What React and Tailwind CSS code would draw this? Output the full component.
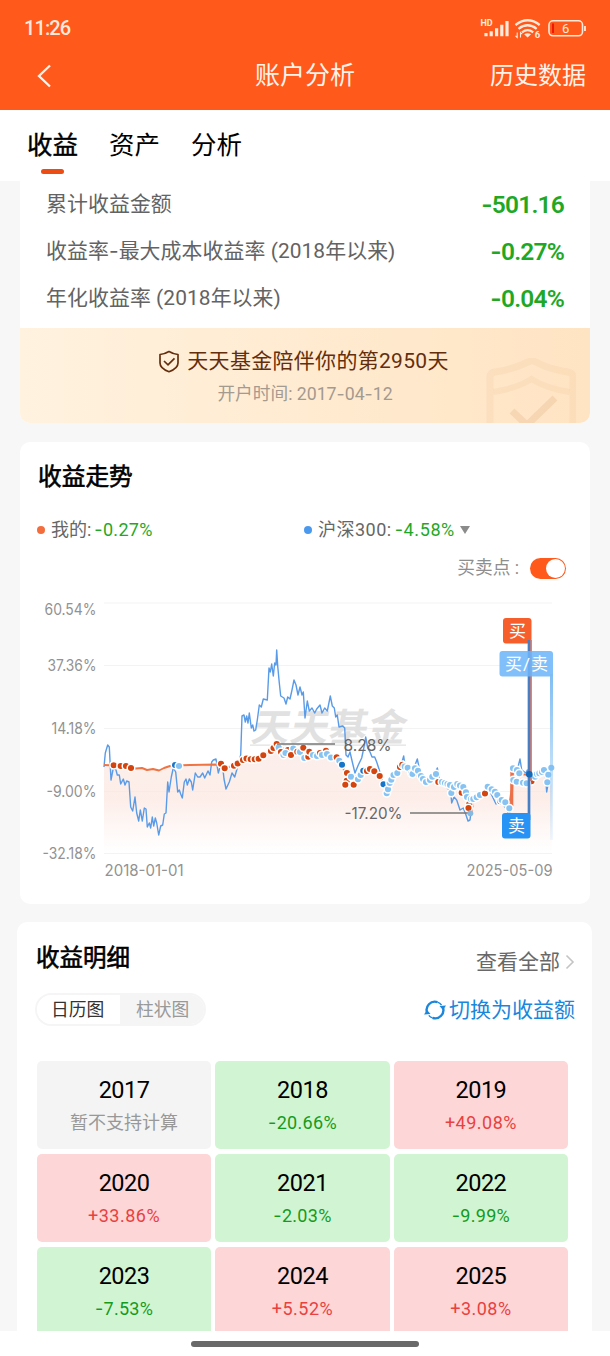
const TABS = ['收益', '资产', '分析']

const STATS = [
  { label: '累计收益金额', value: '-501.16' },
  { label: '收益率-最大成本收益率 (2018年以来)', value: '-0.27%' },
  { label: '年化收益率 (2018年以来)', value: '-0.04%' },
]

const YEARS = [
  { year: '2017', value: null },
  { year: '2018', value: '-20.66%' },
  { year: '2019', value: '+49.08%' },
  { year: '2020', value: '+33.86%' },
  { year: '2021', value: '-2.03%' },
  { year: '2022', value: '-9.99%' },
  { year: '2023', value: '-7.53%' },
  { year: '2024', value: '+5.52%' },
  { year: '2025', value: '+3.08%' },
]

const AXIS = [
  { text: '60.54%', y: 609, line: 603, w: 52 },
  { text: '37.36%', y: 665, line: 665.5, w: 49 },
  { text: '14.18%', y: 728, line: 728.5, w: 45 },
  { text: '-9.00%', y: 791, line: 791.5, w: 50 },
  { text: '-32.18%', y: 853, line: 853.5, w: 54 },
]

// 沪深300
const INDEX_LINE =
  '104,767 105.3,753 107.7,745 109.3,747 111,780 113.3,768 116,770 117.3,775 119.3,775 120.7,784 123.3,779 125,785 126.7,781 129,782 130.7,807 132.7,811 135,797 136.7,813 138.7,821 140.3,810 142.3,821 144.3,808 146,809 147.3,827 149.3,823 150.7,828 152.3,817 153.7,826 155.3,818 156.7,823 158.7,835 160.7,826 162.7,825 164.3,814 166,813 167.7,782 169,792 171.3,777 173.3,768 175.7,772 177.7,792 179.3,790 180.7,794 182.3,798 184.3,782 186,779 187.3,785 189.3,779 191.3,782 192.7,790 195.3,773 197.7,777 200,777 202.7,773 204.7,778 208,771 210,775 211.7,762 213.3,760 216,759 218.3,773 220.7,765 222.7,767 224,779 226,789 229.3,782 232,773 234.7,777 236.7,770 240.7,755 242,716 244,715 245.3,722 246.7,716 248,723 249.3,713 251.3,728 252.7,725 254,731 255.7,730 257.3,720 259.3,705 261.3,707 263.3,699 267.3,700 269,668 270.3,672 271.7,664 273.3,676 274.7,663 276,665 276.7,650 277.7,666 279.3,683 280.7,696 284,698 286,704 287.7,697 290,699 292,690 294,680 296,685 298,695 300,687 302,695 303.3,692 305,718 307.3,701 309.3,711 312,708 314.7,713 316.7,709 320,705 322,713 324.7,708 327.3,711 330.3,696 332.3,706 334.3,708 335.7,717 337.3,715 339,727 342.7,726 344.7,728 346,755 348,757 350,752 352.3,762 355,773 358.3,765 361.7,758 364,747 365.7,737 367.7,748 370,752 372,757 374.7,757 376.7,762 379.3,770 383,784 387,788 393,775 398,770 401.7,763 403.7,756 405.3,768 410,775 414.3,767 417.3,759 420,772 425,780 430,782 433.3,777 437.3,768 440,782 445,785 450.7,792 451.7,803 454,797 456.7,800 460,810 463.3,808 466,815 468,821 470,820 471,812 474,800 480,797 486.7,787 491.7,795 496,804 500,800 505,807 509.3,815 512,800 513.3,770 517.3,770 520,759 521.7,770 526,773 527.3,770 531.7,780 536.7,775 541.7,775 545,770 546.7,792 549.3,777 552.7,768'

const MY_LINE =
  '104,765 114,765.5 124,767 131,767.5 136,768.5 142,768 147,770 153,769 159,770.5 164,768 170,766 176,765.5 190,765 216,764.5 221,765 225,768 236,765 246,759 257,759 263,755 272,751 277,745 284,749 291,755 297,750 303,748 308,753 316,756 326,751 334,758 340,761 345,772 351,778 358,776 364,769 374,771 380,776 387,790 393,778 402,765 410,771 424,780 434,774 441,783 452,788 459,785 466,796 471,813 474,799 485,794 489,787 496,793 502,802 509,808 511.5,790 512,772 521,774 529,775 532,781 540,773 552,768'

// r = 买, l = 买/卖, b = 卖
const DOTS = [
  'r113.7,765.3', 'r120.7,766', 'r126,766', 'r131,768', 'b175,765', 'l179,766',
  'r221,763.7', 'r224.7,768.3', 'r234,765.7', 'r237.7,763.5', 'r243,760', 'r246.5,758.5', 'r250.7,759.3', 'r254.7,759.3', 'r258.7,758.7', 'r263.3,755.3',
  'r271,751', 'r273.5,748', 'r276.7,744', 'l278.7,747.5', 'r281,752', 'l283.5,755', 'r288,750', 'l285.5,753', 'l293.3,748.5', 'r291,755', 'r297.3,751.7', 'l300,752', 'r303.3,747.8', 'l304.3,758', 'r308.3,756.7', 'r309.3,751.7', 'l313,755', 'l317,756',
  'r320,753', 'r326,750.7', 'l322,755', 'l327,754', 'l331,757.5', 'r336.7,757.3', 'l339.3,760.7', 'b342,764.7', 'r347,773', 'r346.7,780.7', 'r345.3,784.7', 'r353.7,784.7', 'l351,776.7', 'l358,779.3', 'l360.7,775', 'b363.3,770.7', 'r367,771', 'r370,769', 'r374.3,771.3', 'r379.7,776',
  'b383.5,784.3', 'l386.7,793.3', 'l388,789.3', 'l389.7,783', 'l391.3,779.7', 'l393.5,775', 'l397.3,773', 'r400,767', 'r402.3,764.7', 'l404.7,766.5', 'l407.7,767.7', 'b411.3,773.5', 'l412.5,774', 'l415,768.3', 'l418,770.7', 'l421,776', 'l423,779', 'l426,782', 'l430,780', 'l432.3,776.7', 'l436,774',
  'r438.3,782', 'l442,782', 'l445,783', 'l447.5,784', 'l451.3,793', 'l450,785', 'l454,787', 'l457.3,784', 'l460,785.5', 'r461.7,792.7', 'l463.3,787', 'l466,792.3', 'l467,797', 'r469.3,804', 'r468.5,808', 'l471,799',
  'l473.3,799', 'l476.7,797.3', 'l480,795', 'r485,793.5', 'l487.7,786.7', 'l491.7,789.3', 'l495,791.7', 'l497.3,795', 'r500.3,801.3', 'l501.7,800', 'l505.3,802.3', 'l509.3,808.3',
  'l513,768.3', 'l513.3,780', 'l516.7,781.7', 'l517,770', 'l519.3,773.3', 'l523,782.7', 'r531.5,781.3', 'l526.7,783.3', 'l535,776.7', 'l537,774', 'l539.3,773.3', 'l542,772', 'l544,770', 'l548.3,774.7', 'l547.3,782.3', 'l551.3,767.7',
]

const DOT_FILL = { r: '#d4440f', l: '#86c3f3', b: '#1575c8' }

// Inter has a wider dash than Roboto
function Dashed({ text }) {
  return (
    <span>
      {text.split(/(-)/).map((part, i) =>
        part === '-' ? <span key={i} className="font-[Inter]">-</span> : part
      )}
    </span>
  )
}

function StatusBar() {
  return (
    <div className="flex h-[55px] items-center justify-between pl-6 pr-[22px] text-[#ffe9da]">
      <span className="text-[20px] font-medium tracking-[-0.9px]">11:26</span>
      <svg width="108" height="24" viewBox="480 15 108 24" fill="none">
        <text x="480.5" y="25" fontSize="9" fontWeight="700" fill="currentColor">HD</text>
        <g stroke="currentColor" strokeWidth="3.2">
          <path d="M486 35.3v-3.3M491.2 35.3v-5M496.6 35.3v-8M501.8 35.3v-11.5M507 35.3V20" />
        </g>
        <g stroke="currentColor" strokeWidth="2.3">
          <path d="M515.5 24q12.3-9.500 24.200 0" />
          <path d="M518.5 27.800q9-7 18.200 0" />
          <path d="M522 31.300q5.600-4.300 11.200 0" />
        </g>
        <path d="M524.2 33.3q3.4-2 6.8 0l-3.4 3.2z" fill="currentColor" />
        <path d="M517.2 31.5v5l-1.7-1.7M520.5 36.5v-5l1.7 1.700" stroke="currentColor" strokeWidth="1.1" />
        <text x="534.8" y="37.3" fontSize="9.5" fontWeight="700" fill="currentColor" stroke="#ff591b" strokeWidth="2" paintOrder="stroke">6</text>
        <rect x="549" y="19.8" width="33.5" height="15" rx="4" stroke="currentColor" strokeWidth="1.6" />
        <rect x="552" y="22.5" width="2" height="9.5" fill="#f01800" />
        <path d="M585 25v5" stroke="currentColor" strokeWidth="1.8" />
        <text x="562" y="32" fontSize="13" fill="currentColor">6</text>
      </svg>
    </div>
  )
}

function Header() {
  return (
    <header className="h-[110px] shrink-0 bg-[#ff591b]">
      <StatusBar />
      <div className="grid h-[41px] grid-cols-3 items-center px-6 text-[#fff3ea]">
        <svg className="ml-3" width="16" height="24" viewBox="0 0 16 24" fill="none" stroke="currentColor" strokeWidth="2.3">
          <path d="M14 1.5L3 12l11 10.500" />
        </svg>
        <h1 className="text-center text-[25px] leading-none">账户分析</h1>
        <span className="text-right text-[24px] leading-none">历史数据</span>
      </div>
    </header>
  )
}

function Tabs() {
  return (
    <nav className="flex h-[71px] shrink-0 gap-[31px] bg-white pl-[27px] pt-[17px] text-black">
      {TABS.map((tab, i) => (
        <div key={tab} className="flex flex-col items-center">
          <span className={`text-[25.5px] leading-[37px] ${i === 0 ? '[-webkit-text-stroke:0.4px]' : ''}`}>{tab}</span>
          {i === 0 && <span className="mt-[5px] h-[5px] w-[23px] rounded-full bg-[#ec4d14]" />}
        </div>
      ))}
    </nav>
  )
}

function Summary() {
  return (
    <section className="mx-5 overflow-hidden rounded-b-[10px] bg-white">
      <div className="h-[147px]">
        {STATS.map(s => (
          <div key={s.label} className="flex h-[47px] items-center justify-between px-[26px]">
            <span className="text-[20.9px] leading-none tracking-[0.08px] text-[#636363]"><Dashed text={s.label} /></span>
            <span className="text-[24.5px] font-semibold leading-none tracking-[-0.8px] text-[#1fa826]"><Dashed text={s.value} /></span>
          </div>
        ))}
      </div>
      <div className="relative h-[95px] bg-linear-to-r from-[#fff2df] to-[#ffe4c3] pt-[19px] text-center">
        <svg className="absolute right-[14px] top-[30px]" width="90" height="65" viewBox="0 0 90 65" fill="none" stroke="#c78850" strokeOpacity=".08">
          <path d="M4 65V19q0-4 5-5Q28 11 42 4q4-2 8 0 12 7 32 10 5 1 5 5v46" strokeWidth="7" />
          <path d="M7.500 34q24-4 38-13 14 9 38 13" strokeWidth="6" />
          <path d="M26 53l15 14 28-27" strokeWidth="7" strokeOpacity=".16" />
        </svg>
        <div className="mr-[3px] flex h-[28px] items-center justify-center gap-[7px] text-[#642e0c]">
          <svg width="22" height="23" viewBox="0 0 22 23" fill="none" stroke="currentColor" strokeWidth="1.7">
            <path d="M11 1.5Q6.500 4.200 2 4.500v8.500q0 5.500 9 8.700 9-3.200 9-8.700V4.500Q15.500 4.200 11 1.500z" strokeLinejoin="round" />
            <path d="M6 11l4 3.800 6.500-6.500" />
          </svg>
          <span className="text-[21px] leading-none tracking-[0.3px]">天天基金陪伴你的第2950天</span>
        </div>
        <p className="mt-1 text-[17.7px] leading-[29px] text-[#a39a90]"><Dashed text="开户时间: 2017-04-12" /></p>
      </div>
    </section>
  )
}

function Label({ text, x, y, w, fill = '#929292', size = 15.5 }) {
  return (
    <text x={x} y={y} textLength={w} lengthAdjust="spacingAndGlyphs" fontSize={size} fill={fill} className="font-[Inter]">
      {text}
    </text>
  )
}

function Chart() {
  return (
    <svg className="block" width="570" height="310" viewBox="20 590 570 310" fill="none">
      <defs>
        <linearGradient id="area" x1="0" y1="745" x2="0" y2="853" gradientUnits="userSpaceOnUse">
          <stop offset="0" stopColor="#f9e4de" stopOpacity=".6" />
          <stop offset=".5" stopColor="#fce6df" stopOpacity=".7" />
          <stop offset="1" stopColor="#fff" stopOpacity=".6" />
        </linearGradient>
        <linearGradient id="pole" x1="0" y1="670" x2="0" y2="840" gradientUnits="userSpaceOnUse">
          <stop offset="0" stopColor="#7dbcf2" />
          <stop offset="1" stopColor="#7dbcf2" stopOpacity=".1" />
        </linearGradient>
      </defs>

      {AXIS.map(a => (
        <g key={a.text}>
          <path d={`M104 ${a.line}H552`} stroke="#f3f3f3" />
          <Label text={a.text} x={96.5 - a.w} y={a.y + 5.5} w={a.w} />
        </g>
      ))}
      <Label text="2018-01-01" x={104.5} y={875.5} w={79} />
      <Label text="2025-05-09" x={466.5} y={875.5} w={86} />

      <polygon points={`${MY_LINE} 552,853 104,853`} fill="url(#area)" />
      <g fill="#e1e1e1">
        <text transform="translate(250 741) skewX(-12)" fontSize="38" fontWeight="700" textLength="154">天天基金</text>
        <path d="M250 744.500h156v1.200H250z" />
      </g>
      <polyline points={INDEX_LINE} stroke="#5a9be8" strokeWidth="1.4" strokeLinejoin="round" />
      <polyline points={MY_LINE} stroke="#ee7444" strokeWidth="1.9" strokeLinejoin="round" />
      <path d="M511.800 770v36" stroke="#ec7049" strokeWidth="3" />

      {DOTS.map(d => {
        const [cx, cy] = d.slice(1).split(',')
        return <circle key={d} cx={cx} cy={cy} r="3.8" fill={DOT_FILL[d[0]]} stroke="#fff" strokeWidth="1.5" />
      })}

      <path d="M277 744h58" stroke="#777" strokeWidth="1.6" />
      <path d="M410 813h58" stroke="#777" strokeWidth="1.6" />
      <circle cx="470.3" cy="813.3" r="3" fill="#86b9e0" />
      <Label text="8.28%" x={343.5} y={750.5} w={48} fill="#666" size={16} />
      <Label text="-17.20%" x={344.5} y={819} w={58} fill="#666" size={16} />

      {/* trade flags */}
      <rect x="503" y="618" width="28.5" height="25.5" rx="3" fill="#f65f2b" />
      <path d="M530.700 640v141" stroke="#ed7b5b" strokeWidth="2.5" />
      <path d="M529 640v180" stroke="#477fc5" strokeWidth="2.700" />
      <rect x="499.500" y="651" width="53.5" height="25.5" rx="3" fill="#6cb5fa" fillOpacity=".86" />
      <path d="M551.500 674v166" stroke="url(#pole)" strokeWidth="3" />
      <rect x="502" y="813" width="28.5" height="25.5" rx="3" fill="#2794f5" />
      <circle cx="529.300" cy="774.300" r="3.3" fill="#1469b8" />
      <g fill="#fff" fontSize="17" textAnchor="middle">
        <text x="517.500" y="637">买</text>
        <text x="526.500" y="670" textLength="43">买/卖</text>
        <text x="516.500" y="832">卖</text>
      </g>
    </svg>
  )
}

function Trend() {
  return (
    <section className="mx-5 mt-[19px] h-[462px] overflow-hidden rounded-[10px] bg-white">
      <h2 className="px-[18px] pt-[17px] text-[23.7px] leading-[36px] text-black [-webkit-text-stroke:0.6px]">收益走势</h2>
      <div className="mt-[21px] flex h-7 items-center pl-[17px] text-[18px] leading-none text-[#666]">
        <div className="flex w-[267px] items-center">
          <span className="mr-1.5 size-2 rounded-full bg-[#f36d3d]" />
          我的:
          <span className="ml-[3px] tracking-[0.3px] text-[#1fa826]"><Dashed text="-0.27%" /></span>
        </div>
        <div className="flex items-center">
          <span className="mr-1.5 size-2 rounded-full bg-[#4b99ee]" />
          <span className="tracking-[0.5px]">沪深300:</span>
          <span className="ml-[3px] tracking-[0.6px] text-[#1fa826]"><Dashed text="-4.58%" /></span>
          <span className="ml-[5px] border-x-[5.5px] border-t-[8px] border-x-transparent border-t-[#8b8b8b]" />
        </div>
      </div>
      <div className="mt-3 flex h-[26px] items-center justify-end pr-6 text-[17.7px] leading-none text-[#8e8e8e]">
        <span className="mr-[11px]">买卖点 :</span>
        <span className="mb-px flex h-[21px] w-9 justify-end rounded-full bg-[#ff591b] p-px">
          <span className="size-[19px] rounded-full bg-white" />
        </span>
      </div>
      <div className="mt-2">
        <Chart />
      </div>
    </section>
  )
}

function YearCell({ year, value }) {
  const bg = !value ? 'bg-[#f4f4f4]' : value[0] === '-' ? 'bg-[#d1f5d2]' : 'bg-[#fdd6d8]'
  const color = !value ? 'text-[#989898]' : value[0] === '-' ? 'text-[#169a1c] tracking-[0.3px]' : 'text-[#e9413f] tracking-[0.5px]'
  return (
    <div className={`flex h-[88px] flex-col items-center rounded-[5px] pt-4 ${bg}`}>
      <span className="text-[23.5px] leading-[27px] tracking-[-0.5px] text-black">{year}</span>
      <span className={`mt-1.5 text-[18px] leading-[26px] ${color}`}>
        {value ? <Dashed text={value} /> : '暂不支持计算'}
      </span>
    </div>
  )
}

function Details() {
  return (
    <section className="ml-[17px] mr-[18px] mt-[18px] rounded-t-[10px] bg-white px-5 pt-[18px]">
      <div className="flex h-9 items-center justify-between">
        <h2 className="-ml-px pt-0.5 text-[23.5px] leading-none text-black [-webkit-text-stroke:0.6px]">收益明细</h2>
        <div className="-mr-[3px] flex items-center gap-[5px] pt-2 text-[21px] leading-none text-[#686868]">
          查看全部
          <svg width="10" height="16" viewBox="0 0 10 16" fill="none" stroke="#c4c4c4" strokeWidth="1.6">
            <path d="M1.5 1.5L8 8l-6.500 6.500" />
          </svg>
        </div>
      </div>
      <div className="mt-[17px] flex h-[33px] items-center justify-between">
        <div className="-ml-0.5 flex h-full overflow-hidden rounded-full border-2 border-[#f5f5f5] text-[17.8px] leading-[30px]">
          <span className="w-[83px] bg-white pl-[14px] text-[#333]">日历图</span>
          <span className="w-[84px] bg-[#f5f5f5] pl-4 text-[#999]">柱状图</span>
        </div>
        <div className="-mr-[3px] flex items-center gap-[3px] text-[21px] leading-none text-[#1a86dc]">
          <svg width="22" height="22" viewBox="0 0 22 22" fill="none" stroke="currentColor" strokeWidth="2.4">
            <path d="M3.2 14A8.300 8.300 0 0 1 13.500 3.100M18.800 8A8.300 8.300 0 0 1 8.500 18.900" />
            <path d="M13.5 3.100A8.300 8.300 0 0 1 17.500 6M8.500 18.900A8.300 8.300 0 0 1 4.800 16.400" strokeWidth="1.4" />
            <path d="M0 15.5l3-4.500 3.500 4zM22 6.500l-3 4.500-3.500-4z" fill="currentColor" stroke="none" />
          </svg>
          <span className="pt-0.5">切换为收益额</span>
        </div>
      </div>
      <div className="mr-1 mt-[35px] grid grid-cols-3 gap-x-[4.3px] gap-y-[5px]">
        {YEARS.map(y => <YearCell key={y.year} {...y} />)}
      </div>
    </section>
  )
}

export default function App() {
  return (
    <div className="flex h-[1356px] w-[610px] flex-col overflow-hidden bg-white font-[Roboto,'Noto_Sans_CJK_SC',sans-serif]">
      <Header />
      <Tabs />
      <main className="h-[1150px] shrink-0 overflow-hidden bg-[#f7f7f7]">
        <Summary />
        <Trend />
        <Details />
      </main>
      <footer className="flex flex-1 justify-center pt-2.5">
        <span className="h-[6px] w-[228px] rounded-full bg-[#696969]" />
      </footer>
    </div>
  )
}
